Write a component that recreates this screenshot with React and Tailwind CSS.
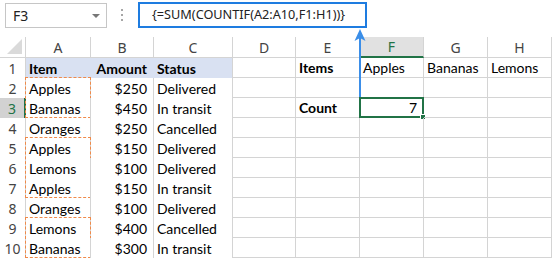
import React from "react";

const colLetters = ["A", "B", "C", "D", "E", "F", "G", "H"];

const rows = [
  ["Item", "Amount", "Status", "", "Items", "Apples", "Bananas", "Lemons"],
  ["Apples", "$250", "Delivered"],
  ["Bananas", "$450", "In transit", "", "Count", "7"],
  ["Oranges", "$250", "Cancelled"],
  ["Apples", "$150", "Delivered"],
  ["Lemons", "$100", "Delivered"],
  ["Apples", "$150", "In transit"],
  ["Oranges", "$100", "Delivered"],
  ["Lemons", "$400", "Cancelled"],
  ["Bananas", "$300", "In transit"],
];

// dashed "marching ants" groups in column A: start row index -> number of rows
const groups = { 1: 2, 4: 3, 8: 2 };

const uiFont = { fontFamily: "'Noto Sans', 'Open Sans', sans-serif" };
const cellFont = { fontFamily: "Lato, 'Liberation Sans', sans-serif" };

function cellClass(r, c) {
  // c: 0..7 for columns A..H
  if (r === 0 && c < 3) {
    return c === 2
      ? "bg-[#d9e1f2] border-r border-r-[#d4d4d4] font-bold"
      : "bg-[#d9e1f2] border-r border-r-[#d9e1f2] font-bold";
  }
  if (c < 3) return "border-r border-r-[#d4d4d4]";
  if (c === 4) return "border-r border-b border-[#d4d4d4] font-bold";
  return "border-r border-b border-[#d4d4d4]";
}

export default function App() {
  return (
    <div className="relative w-[552px] h-[258px] overflow-hidden bg-white text-black">
      {/* formula bar */}
      <div className="flex h-[37px] items-start">
        <div
          className="ml-[5px] mt-[3px] flex h-[25px] w-[102px] items-center justify-between border border-[#c6c6c6] pl-[7px] pr-[6px] text-[14px] text-[#222]"
          style={uiFont}
        >
          <span>F3</span>
          <span className="h-0 w-0 border-x-[4px] border-t-[4px] border-x-transparent border-t-[#777]" />
        </div>
        <div className="ml-[14px] mt-[9px] flex w-[2px] flex-col gap-[3px]">
          <span className="h-[2px] w-[2px] bg-[#a6a6a6]" />
          <span className="h-[2px] w-[2px] bg-[#a6a6a6]" />
          <span className="h-[2px] w-[2px] bg-[#a6a6a6]" />
        </div>
        <div
          className="ml-[15px] mt-[2px] flex h-[26px] w-[229px] items-center border-2 border-[#1e7ce0] pl-[12px] text-[12.7px] text-[#222]"
          style={uiFont}
        >
          {"{=SUM(COUNTIF(A2:A10,F1:H1))}"}
        </div>
      </div>

      {/* grid */}
      <div className="grid grid-cols-[26px_65px_63px_79px_63px_64px_64px_64px_64px]">
        {/* column headers */}
        <div className="relative h-[21px] border-r border-b border-[#d4d4d4]">
          <span className="absolute right-[3px] bottom-[3px] h-0 w-0 border-l-[15px] border-b-[15px] border-l-transparent border-b-[#dadada]" />
        </div>
        {colLetters.map((l) => (
          <div
            key={l}
            className={
              l === "F"
                ? "flex h-[21px] items-center justify-center border-r border-r-[#d4d4d4] border-b-2 border-b-[#217346] bg-[#e1e1e1] text-[14px] text-[#217346]"
                : "flex h-[21px] items-center justify-center border-r border-b border-[#d4d4d4] text-[14px] text-[#444]"
            }
            style={uiFont}
          >
            {l}
          </div>
        ))}

        {rows.map((row, r) => (
          <React.Fragment key={r}>
            <div
              className={
                r === 2
                  ? "flex h-[20px] items-center justify-center border-r-2 border-r-[#217346] bg-[#d2d2d2] text-[14px] text-[#217346]"
                  : "flex h-[20px] items-center justify-center border-r border-r-[#d4d4d4] text-[14px] text-[#444]"
              }
              style={uiFont}
            >
              {r + 1}
            </div>
            {colLetters.map((_, c) => {
              const v = row[c] || "";
              const right = c === 1 || (c === 5 && r === 2);
              return (
                <div
                  key={c}
                  className={`relative flex h-[20px] items-center whitespace-nowrap text-[14px] ${
                    right ? "justify-end pr-[6px]" : "pl-[3px]"
                  } ${cellClass(r, c)}`}
                  style={cellFont}
                >
                  {c === 0 && groups[r] && (
                    <span
                      className={
                        groups[r] === 3
                          ? "absolute -left-px -top-px h-[61px] w-[66px] border border-dashed border-[#ef8a4a]"
                          : "absolute -left-px -top-px h-[41px] w-[66px] border border-dashed border-[#ef8a4a]"
                      }
                    />
                  )}
                  {c === 5 && r === 2 && (
                    <span className="absolute -left-px -top-px h-[21px] w-[65px] border-2 border-[#217346]">
                      <span className="absolute -right-[4px] -bottom-[4px] h-[6px] w-[6px] border border-white bg-[#217346]" />
                    </span>
                  )}
                  <span className="relative">{v}</span>
                </div>
              );
            })}
          </React.Fragment>
        ))}
      </div>

      {/* arrow from selected cell to formula */}
      <svg className="absolute left-[353px] top-[28px]" width="14" height="70" viewBox="0 0 14 70">
        <path d="M7 6 L7 69" stroke="#3b8ee8" strokeWidth="2" />
        <path d="M7 1 L12.5 13 L7 10 L1.5 13 Z" fill="#3b8ee8" />
      </svg>
    </div>
  );
}
